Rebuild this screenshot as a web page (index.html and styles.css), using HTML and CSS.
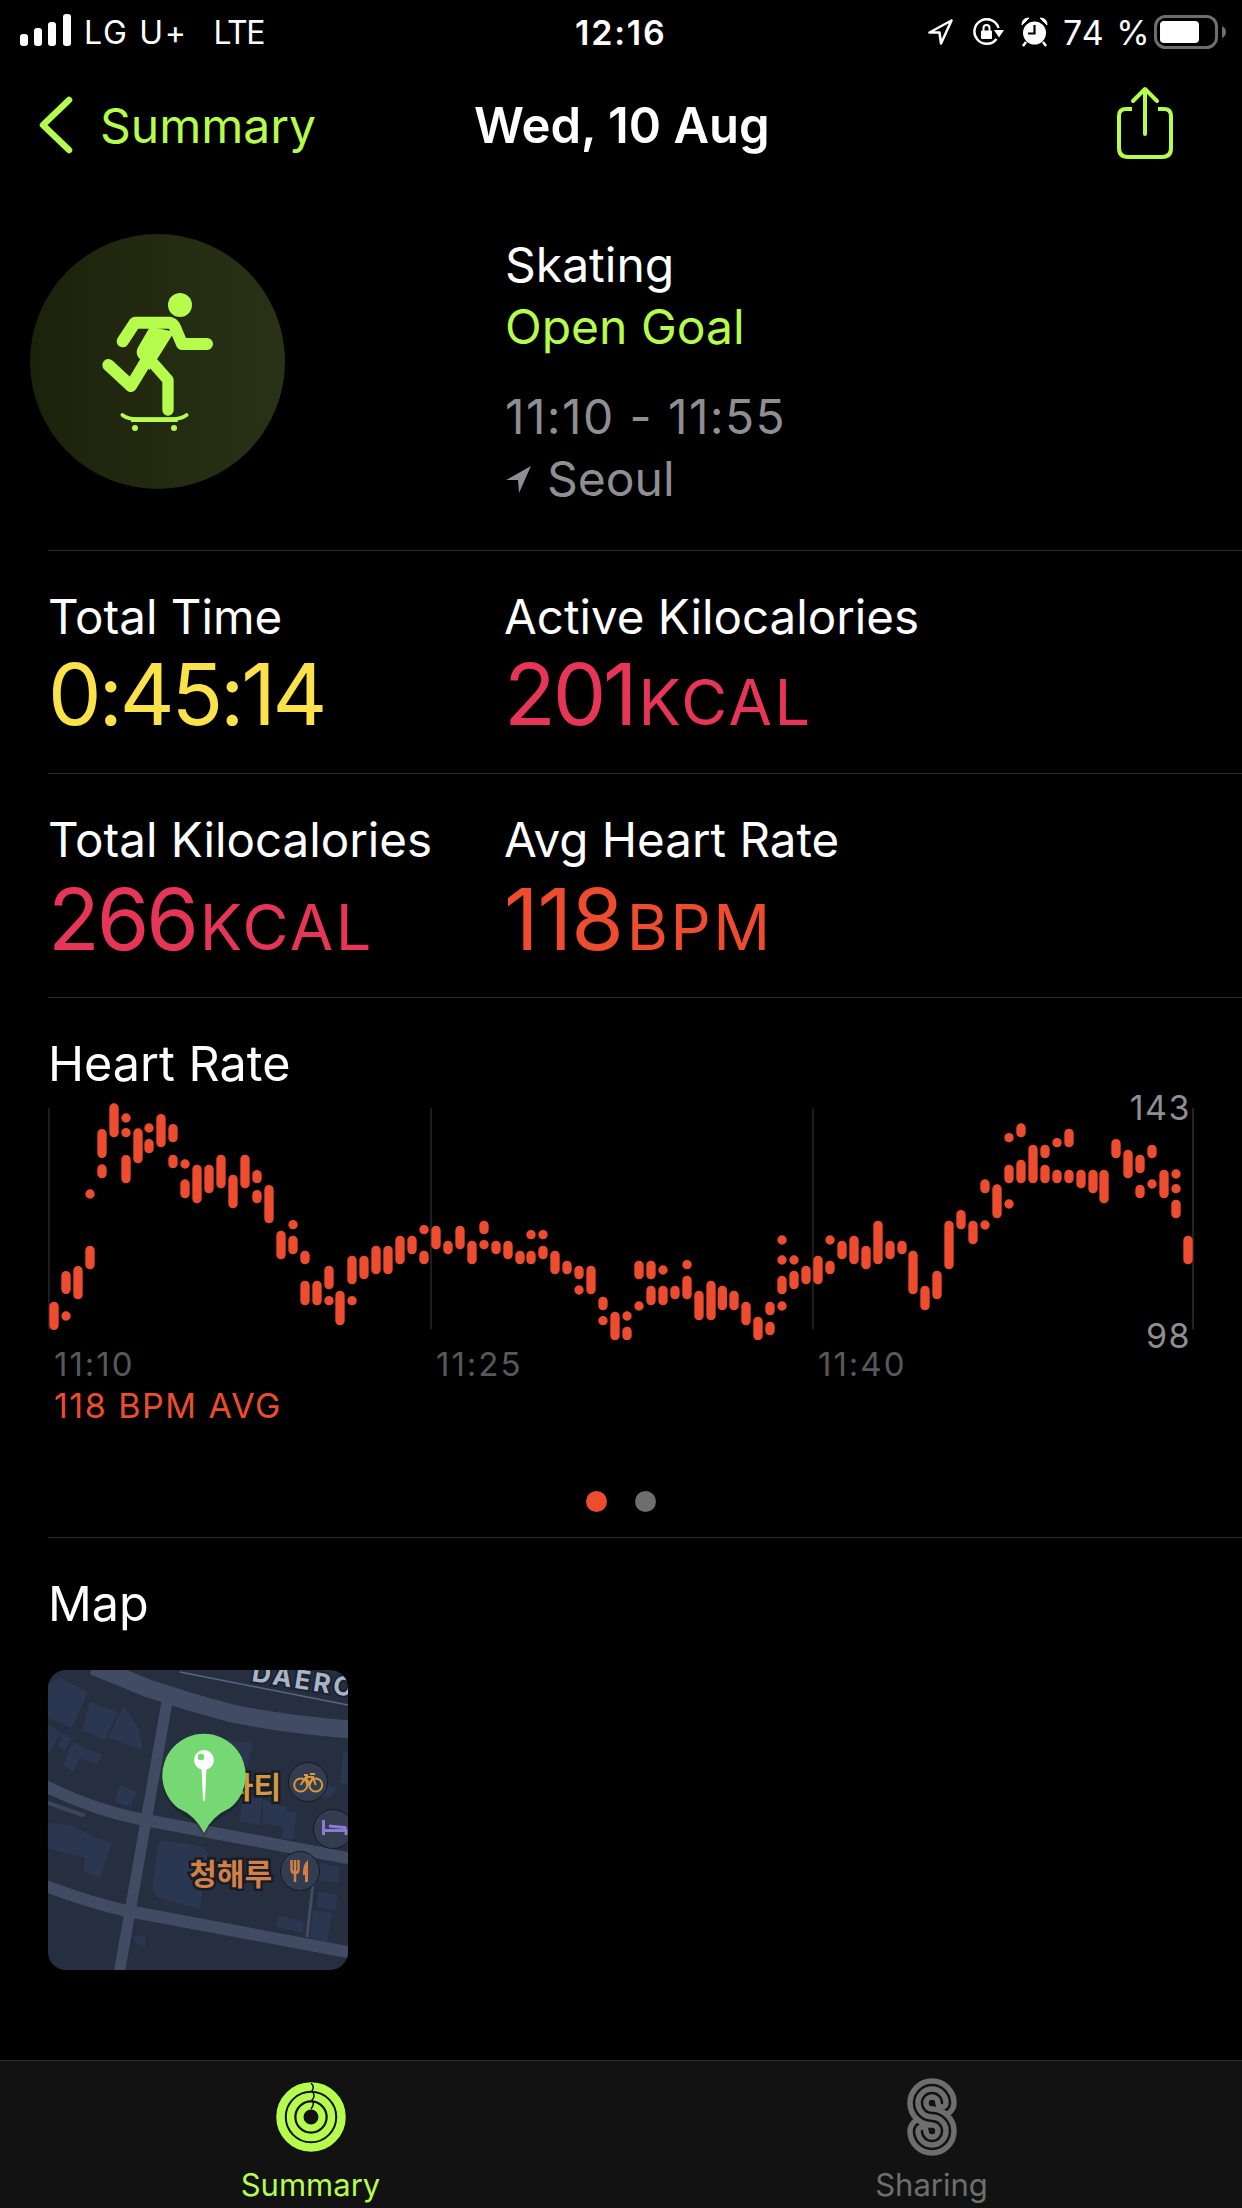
FILE: index.html
```html
<!DOCTYPE html>
<html lang="en">
<head>
    <meta charset="UTF-8">
    <title>Workout Summary</title>
    <link rel="stylesheet" href="styles.css">
</head>
<body>
    <div class="phone">
        <div class="status">
            <div class="status-left">
                <svg class="signal" width="52" height="32" viewBox="0 0 52 32"><rect x="0" y="20" width="8" height="12" rx="3"/><rect x="14" y="14" width="8" height="18" rx="3"/><rect x="28" y="8" width="8" height="24" rx="3"/><rect x="43" y="0" width="8" height="32" rx="3"/></svg>
                <span class="carrier">LG U+</span>
                <span class="lte">LTE</span>
            </div>
            <div class="status-time">12:16</div>
            <div class="status-right">
                <svg class="ic-loc" width="25" height="26" viewBox="0 0 25 26"><path class="stat-line" d="M23.500 1.500L1.500 13.500H11.500L13 24.500Z"/></svg>
                <svg class="ic-rot" width="31" height="28" viewBox="0 0 31 28"><path class="stat-line" d="M23.500 21A12.300 12.300 0 1 1 25.500 10"/><path d="M21 12L31 12L26 19.500Z" fill="#fff"/><rect x="8" y="12.500" width="11" height="8.500" rx="1" fill="#fff"/><path class="stat-line thin" d="M10.500 13V10A3 3 0 0 1 16.500 10V13"/></svg>
                <svg class="ic-alarm" width="27" height="30" viewBox="0 0 27 30"><circle cx="13.500" cy="16" r="11.500" fill="#fff"/><path d="M13.500 8V16.500H7" fill="none" stroke="#000" stroke-width="2.200"/><path d="M1 8Q1 1 8 1ZM26 8Q26 1 19 1Z" fill="#fff" stroke="#fff"/><path class="stat-line" d="M5 25L2 29M22 25L25 29"/></svg>
                <span class="pct">74 %</span>
                <svg width="72" height="34" viewBox="0 0 72 34"><rect x="1.500" y="1.500" width="61" height="31" rx="10" fill="none" stroke="#6e6e6e" stroke-width="3"/><rect x="6" y="6" width="39" height="22" rx="4" fill="#fff"/><path d="M68 11Q72 13 72 17T68 23Z" fill="#6e6e6e"/></svg>
            </div>
        </div>

        <div class="nav">
            <div class="back">
                <svg width="36" height="58" viewBox="0 0 36 58"><path d="M31 4L5 29L31 54" fill="none" stroke="#b5fc4c" stroke-width="6.500" stroke-linecap="round" stroke-linejoin="round"/></svg>
                <span>Summary</span>
            </div>
            <div class="nav-title">Wed, 10 Aug</div>
            <svg class="share" width="58" height="74" viewBox="0 0 58 74"><path d="M16 23H10Q3 23 3 30V62Q3 71 12 71H46Q55 71 55 62V30Q55 23 48 23H42" fill="none" stroke="#b5fc4c" stroke-width="4"/><path d="M29 48V4M17 15L29 3L41 15" fill="none" stroke="#b5fc4c" stroke-width="4" stroke-linecap="round" stroke-linejoin="round"/></svg>
        </div>

        <section class="head">
            <div class="badge">
                <svg class="skater" width="160" height="170" viewBox="0 0 480 510">
                    <circle cx="297" cy="105" r="36" fill="#b5fc4c"/>
                    <g fill="none" stroke="#b5fc4c" stroke-linecap="round" stroke-linejoin="round">
                        <path stroke-width="36" d="M125 214L162 158H265Q276 160 282 172L303 222H378"/>
                        <path stroke-width="36" d="M196 272L150 348L82 285"/>
                        <path stroke-width="34" d="M208 270L261 330V420"/>
                        <path stroke-width="11" d="M124 435Q140 448 175 448H265Q300 448 317 435"/>
                    </g>
                    <path d="M207 170L280 185L232 262L205 300L172 262Q162 245 172 230Z" fill="#b5fc4c"/>
                    <path d="M150 442H290V456H150Z" fill="#b5fc4c"/>
                    <circle cx="162" cy="474" r="9" fill="#b5fc4c"/>
                    <circle cx="279" cy="474" r="9" fill="#b5fc4c"/>
                </svg>
            </div>
            <div class="head-info">
                <div class="line">Skating</div>
                <div class="line green">Open Goal</div>
                <div class="line grey time">11:10 - 11:55</div>
                <div class="line grey place">
                    <svg width="26" height="28" viewBox="0 0 24 26"><path d="M24 1L1 14H12L13 26Z" fill="#8e8e93"/></svg>
                    Seoul
                </div>
            </div>
        </section>

        <section class="stats">
            <div class="stat">
                <div class="stat-label">Total Time</div>
                <div class="stat-value yellow">0:45:14</div>
            </div>
            <div class="stat">
                <div class="stat-label">Active Kilocalories</div>
                <div class="stat-value pink">201<span class="unit">KCAL</span></div>
            </div>
        </section>
        <section class="stats">
            <div class="stat">
                <div class="stat-label">Total Kilocalories</div>
                <div class="stat-value pink">266<span class="unit">KCAL</span></div>
            </div>
            <div class="stat">
                <div class="stat-label">Avg Heart Rate</div>
                <div class="stat-value red">118<span class="unit">BPM</span></div>
            </div>
        </section>

        <section class="heart">
            <h2>Heart Rate</h2>
            <div class="chart">
                <svg class="plot" width="1146" height="240" viewBox="144 30 3438 720">
                    <g stroke-width="3">
                        <path stroke="#3a3a3c" d="M147 55V718M1293 55V718M2439 55V718"/>
                        <path stroke="#48484a" d="M3579 55V718"/>
                    </g>
                    <g fill="none" stroke="#ee4c2e" stroke-width="28" stroke-linecap="round">
                        <path d="M162 649V706M198 678h.1M234 542V614M198 557V598M270 481V524M270 312h.1M306 131V190M306 237V251M342 54V128M378 84h.1M378 128h.1M378 209V266M414 129V206M447 114h.1M447 161V176M483 86V158M519 116V143M519 208V221M555 222h.1M555 282V311M591 238V326M627 238V296M663 208V281M699 268V341M735 208V281M771 254V266M771 314V326M807 299V386M843 436V494M879 404h.1M879 451V479M915 496V509M915 586V632M951 586V632M987 541V584M987 632h.1M1020 616V692M1056 511V569M1056 632h.1M1092 511V554M1128 481V539M1164 481V539M1200 451V509M1236 451V479"/>
                        <path transform="translate(1230 0)" d="M42 419h.1M42 496V509M78 421V464M114 466V479M150 421V464M186 466V509M222 406V419M222 464h.1M258 466V479M294 466V494M330 496V509M363 434h.1M363 496V509M399 434h.1M399 481V494M435 496V539M471 526V539M507 541V554M507 600h.1M543 541V599M579 634V647M579 692h.1M615 679V737M651 678h.1M651 724V737M687 526V554M687 648h.1M723 526V554M723 601V632M759 540h.1M759 601V632M795 601V614M831 524h.1M831 571V614M867 616V677M903 586V677M937 601V647M972 616V647M1008 649V692M1044 694V737M1080 649V662M1080 709V722M1116 450h.1M1116 510h.1M1116 571V599M1116 648h.1M1152 510h.1M1152 556V584M1188 541V569M1224 511V569"/>
                        <path transform="translate(2466 0)" d="M24 450h.1M24 526V539M60 466V494M96 451V509M132 481V524M168 406V509M204 466V494M240 466V479M273 496V599M309 601V647M345 556V614M381 406V524M417 374V404M453 406V449M489 405h.1M489 282V296M525 297V371M561 143h.1M561 238V266M561 342h.1M597 114V128M597 223V266M633 178V266M669 178V191M669 238V266M705 158h.1M705 253V266M741 130V158M741 253V266M777 253V281M813 253V296M846 253V326M882 161V191M918 193V251M954 208V236M954 298V311M990 178V191M990 282h.1M1026 253V311M1062 252h.1M1062 296h.1M1062 343V371M1098 451V509"/>
                    </g>
                </svg>
                <span class="scale-max">143</span>
                <span class="scale-min">98</span>
            </div>
            <div class="ticks">
                <span>11:10</span>
                <span>11:25</span>
                <span>11:40</span>
            </div>
            <div class="avg">118 BPM AVG</div>
            <div class="dots"><i class="dot on"></i><i class="dot"></i></div>
        </section>

        <section class="map-sec">
            <h2>Map</h2>
            <div class="map">
                <svg width="300" height="300" viewBox="0 0 300 300">
                    <rect width="300" height="300" fill="#252f3f"/>
                    <!-- buildings -->
                    <g fill="#2b3650">
                        <path d="M12 8L40 22L24 58L0 48V14Z"/>
                        <path d="M42 32L70 42L57 70L34 60Z"/>
                        <path d="M75 37Q94 55 94 80L60 68Z"/>
                        <path d="M0 55L14 63L0 83Z"/>
                        <path d="M15 63L24 68L17 80L10 77Z"/>
                        <path d="M24 72L54 85L49 95L32 88L25 102L15 95Z"/>
                        <path d="M72 115L89 122L82 137L67 132Z"/>
                        <path d="M0 153L22 155L49 168L64 173L52 208L35 202L37 188L0 178Z"/>
                        <path d="M115 170L155 177L160 183L152 240L109 227L104 220L110 175Z"/>
                        <path d="M155 67L205 73L199 97Z"/>
                        <path d="M194 123L215 127L212 155L192 152Z"/>
                        <path d="M215 130L239 137L235 157L215 153Z"/>
                        <path d="M235 140L249 143L245 170L234 168Z"/>
                        <path d="M275 113L289 118L282 128L272 127Z"/>
                        <path d="M295 82H300V113H292Z"/>
                        <path d="M272 193L292 197L290 213L269 210Z"/>
                        <path d="M270 222L290 225L287 240L269 237Z"/>
                        <path d="M265 240L284 243L279 272L262 268Z"/>
                        <path d="M230 245L257 252L254 263L229 257Z"/>
                        <path d="M85 267L97 265V277L89 273Z"/>
                    </g>
                    <!-- roads -->
                    <g fill="none" stroke="#414c64">
                        <path stroke-width="18" d="M45 -4Q75 8 99 18Q140 32 182 43Q240 55 310 60"/>
                        <path stroke-width="11" d="M119 32L71 304"/>
                        <path stroke-width="12" d="M-5 115Q45 140 92 149L305 189"/>
                        <path stroke-width="12" d="M-5 215Q40 232 75 240L305 283"/>
                        <path stroke-width="3" d="M265 213L259 267"/>
                    </g>
                    <path d="M0 133L35 145" stroke="#3b465c" stroke-width="4" stroke-linecap="round"/>
                    <path d="M132 2L300 35" stroke="#5a6780" stroke-width="1.500"/>
                    <text class="road-label" x="203" y="11" transform="rotate(9 203 11)">DAERO</text>
                    <circle cx="260" cy="112" r="19.500" fill="#333d4f" stroke="#161c28"/>
                    <circle cx="285" cy="159" r="19.500" fill="#333d4f" stroke="#161c28"/>
                    <circle cx="252" cy="201" r="19.500" fill="#333d4f" stroke="#161c28"/>
                    <g fill="none" stroke="#d39a3f" stroke-width="2">
                        <circle cx="252.700" cy="115" r="6.500"/><circle cx="267.700" cy="115" r="6.500"/>
                        <path d="M252.700 115L258 107H265L267.700 115M258 107L261.500 115L265 107M256 105H260M262 104H267"/>
                    </g>
                    <path d="M275.500 150V165M275 160.500H298V165M281 156L297 157.500V160" fill="none" stroke="#8d79d6" stroke-width="3"/>
                    <path d="M243.500 190V199Q243.500 203 247 203Q250.500 203 250.500 199V190M247 190V212" fill="none" stroke="#d28045" stroke-width="2.500"/>
                    <path d="M260 190Q254 195 255 205H257V212H260Z" fill="#d28045"/>
                    <text class="poi bike" x="233" y="128" text-anchor="end">파티</text>
                    <text class="poi food" x="224" y="215" text-anchor="end">청해루</text>
                    <path d="M130 138Q148 146 156 163Q164 146 182 138A41.700 41.700 0 1 0 130 138Z" fill="#000" opacity=".18" transform="translate(0 4)"/>
                    <path d="M130 138Q148 146 156 163Q164 146 182 138A41.700 41.700 0 1 0 130 138Z" fill="#75d872"/>
                    <circle cx="156" cy="90" r="10" fill="#fff"/>
                    <circle cx="153" cy="87" r="3.300" fill="#75d872"/>
                    <path d="M153.500 98H158.500L157 130Q156 132 155 130Z" fill="#fff"/>
                </svg>
            </div>
        </section>

        <div class="tabs">
            <div class="tab active">
                <div class="tab-icon">
                    <svg width="70" height="70" viewBox="0 0 70 70">
                        <g fill="none" stroke="#b5fc4c">
                            <circle cx="35" cy="35" r="30.500" stroke-width="8.500"/>
                            <circle cx="35" cy="35" r="20.500" stroke-width="7.500"/>
                            <circle cx="35" cy="35" r="11" stroke-width="7"/>
                        </g>
                        <path d="M35 1Q39 5 36 9Q40 14 36 18Q39 22 35 27" fill="none" stroke="#121212" stroke-width="1.500"/>
                    </svg>
                </div>
                <span>Summary</span>
            </div>
            <div class="tab">
                <div class="tab-icon">
                    <svg width="50" height="80" viewBox="0 0 50 80"><path fill="none" stroke="#6e6e6e" stroke-width="5.500" stroke-linecap="round" d="M41 37Q47 32 47 26A22 22 0 1 0 25 48A6 6 0 1 1 19 54A4 4 0 0 0 11 54A14 14 0 1 0 25 40A14 14 0 1 1 39 26A4 4 0 0 1 31 26A6 6 0 1 0 25 32A22 22 0 1 1 3 54Q3 48 9 43"/></svg>
                </div>
                <span>Sharing</span>
            </div>
        </div>
    </div>
</body>
</html>
```
FILE: styles.css
```css
/* Page */
body {
    margin: 0;
    background: #000;
    color: #fff;
    font-family: "Inter", "Noto Sans CJK KR", sans-serif;
}

.phone {
    width: 1242px;
    height: 2208px;
    display: flex;
    flex-direction: column;
    overflow: hidden;
}

/* Status bar */
.status {
    height: 64px;
    display: flex;
    align-items: center;
    justify-content: space-between;
    padding: 0 16px 0 20px;
    position: relative;
    font-size: 32px;
}

.status-left,
.status-right {
    display: flex;
    align-items: center;
}

.signal {
    fill: #fff;
    margin: 0 12px 4px 0;
}

.carrier {
    letter-spacing: 1.7px;
}

.lte {
    margin-left: 26px;
    letter-spacing: -1.5px;
}

.status-time {
    position: absolute;
    left: 575px;
    font-weight: 600;
    font-size: 34px;
    letter-spacing: 1.8px;
}

.ic-loc {
    margin-right: 20px;
}

.ic-rot {
    margin-right: 17px;
}

.ic-alarm {
    margin-right: 15px;
}

.pct {
    width: 80px;
    margin-right: 11px;
    font-size: 34px;
    letter-spacing: 1.500px;
    white-space: nowrap;
}

.stat-line {
    fill: none;
    stroke: #fff;
    stroke-width: 2.500;
    stroke-linejoin: round;
}

.thin {
    stroke-width: 2;
}

/* Nav */
.nav {
    height: 122px;
    display: flex;
    align-items: center;
    position: relative;
    font-size: 48px;
}

.back {
    display: flex;
    align-items: center;
    gap: 26px;
    margin-left: 38px;
    color: #b5fc4c;
}

.nav-title {
    position: absolute;
    left: 474px;
    font-weight: 600;
    font-size: 49px;
}

.share {
    position: absolute;
    left: 1116px;
    top: 22px;
}

/* Workout header */
.head {
    height: 365px;
    display: flex;
    margin-left: 48px;
    border-bottom: 1px solid #2c2c2e;
    box-sizing: border-box;
}

.badge {
    width: 255px;
    height: 255px;
    margin: 48px 0 0 -18px;
    border-radius: 50%;
    background: linear-gradient(90deg, #1c220a, #293216);
    display: flex;
    align-items: center;
    justify-content: center;
}

.skater {
    margin: 0 0 14px 6px;
}

.head-info {
    margin: 48px 0 0 220px;
    font-size: 48px;
}

.line {
    height: 62px;
    line-height: 62px;
}

.green {
    color: #b5fc4c;
}

.grey {
    color: #8e8e93;
}

.time {
    margin-top: 28px;
    letter-spacing: 1.4px;
}

.place {
    display: flex;
    align-items: center;
    gap: 16px;
}

/* Stat rows */
.stats {
    height: 223px;
    display: flex;
    margin-left: 48px;
    padding-top: 36px;
    border-bottom: 1px solid #2c2c2e;
    box-sizing: border-box;
}

.stats + .stats {
    height: 224px;
}

.stat {
    width: 456px;
}

.stat-label {
    font-size: 47.500px;
    line-height: 60px;
}

.stat-value {
    margin-top: 2px;
    font-size: 85px;
    line-height: 92px;
    letter-spacing: -3.2px;
}

.stats + .stats .stat-value {
    margin-top: 4px;
}

.unit {
    margin-left: 4px;
    font-size: 63px;
    letter-spacing: 2.5px;
}

.yellow {
    color: #fbe24b;
}

.pink {
    color: #e63557;
}

.red {
    color: #ee4c2e;
    letter-spacing: -1px;
}

/* Heart rate */
.heart {
    height: 540px;
    margin-left: 48px;
    padding-top: 36px;
    border-bottom: 1px solid #2c2c2e;
    box-sizing: border-box;
}

h2 {
    margin: 0;
    font-size: 48.500px;
    font-weight: 400;
    line-height: 60px;
}

.chart {
    position: relative;
    height: 240px;
    margin-top: 6px;
}

.plot {
    display: block;
}

.scale-max,
.scale-min {
    position: absolute;
    right: 51px;
    font-size: 34px;
    line-height: 40px;
    letter-spacing: 1.5px;
    color: #8e8e93;
}

.scale-max {
    top: -12px;
}

.scale-min {
    top: 216px;
}

.ticks {
    display: flex;
    margin-top: 4px;
    font-size: 33px;
    line-height: 40px;
    letter-spacing: 2px;
    color: #58585a;
}

.ticks span {
    width: 382px;
    padding-left: 6px;
    box-sizing: border-box;
}

.avg {
    margin: 2px 0 0 6px;
    font-size: 34px;
    line-height: 40px;
    letter-spacing: 1.5px;
    color: #ee4c2e;
}

.dots {
    display: flex;
    justify-content: center;
    gap: 28px;
    margin: 65px 49px 0 0;
}

.dot {
    width: 21px;
    height: 21px;
    border-radius: 50%;
    background: #6e6e6e;
}

.dot.on {
    background: #ee4c2e;
}

/* Map */
.map-sec {
    flex: 1;
    margin-left: 48px;
    padding-top: 36px;
}

.map {
    width: 300px;
    height: 300px;
    margin-top: 36px;
    border-radius: 18px;
    overflow: hidden;
}

.map svg {
    display: block;
}

.road-label {
    font-size: 26px;
    font-weight: 700;
    letter-spacing: 3px;
    fill: #a9b4c6;
    stroke: #1b2230;
    stroke-width: 4px;
    paint-order: stroke;
}

.poi {
    font-family: "Noto Sans CJK KR", sans-serif;
    font-size: 30px;
    font-weight: 700;
    stroke: #161c28;
    stroke-width: 5px;
    paint-order: stroke;
}

.bike {
    fill: #d39a3f;
}

.food {
    fill: #d28045;
}

/* Tab bar */
.tabs {
    height: 148px;
    display: flex;
    background: #121212;
    border-top: 1px solid #2c2c2e;
    box-sizing: border-box;
}

.tab {
    width: 50%;
    display: flex;
    flex-direction: column;
    align-items: center;
    font-size: 31px;
    line-height: 36px;
    color: #6e6e6e;
    padding-top: 16px;
    box-sizing: border-box;
}

.tab-icon {
    height: 80px;
    margin-bottom: 10px;
    display: flex;
    align-items: center;
}

.tab.active {
    color: #b5fc4c;
}
```
